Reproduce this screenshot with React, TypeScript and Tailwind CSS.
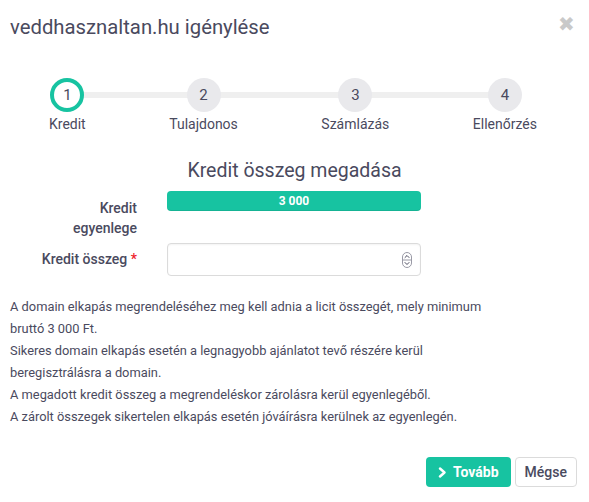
import React from 'react';

const steps = [
  { n: 1, label: 'Kredit', active: true },
  { n: 2, label: 'Tulajdonos', active: false },
  { n: 3, label: 'Számlázás', active: false },
  { n: 4, label: 'Ellenőrzés', active: false },
];

function Stepper() {
  return (
    <div className="relative mx-[49px] mt-[36px] flex w-[488px] justify-between">
      {/* track between first and last circle */}
      <div className="absolute left-[20px] right-[34px] top-[14px] h-[6px] bg-[#efefef]" />
      {steps.map((s) => (
        <div key={s.n} className="relative flex flex-col items-center">
          <div
            className={
              s.active
                ? 'flex h-[34px] w-[34px] items-center justify-center rounded-full border-[4px] border-[#17c3a1] bg-white text-[15px] text-[#4a4a5e]'
                : 'flex h-[34px] w-[34px] items-center justify-center rounded-full bg-[#e9e9ec] text-[15px] text-[#4a4a5e]'
            }
          >
            {s.n}
          </div>
          <span className="mt-[2px] text-[14px] leading-[20px] text-[#4a4a5e]">{s.label}</span>
        </div>
      ))}
    </div>
  );
}

function Spinner() {
  return (
    <svg width="10" height="16" viewBox="0 0 10 16" fill="none">
      <rect x="0.5" y="0.5" width="9" height="15" rx="4.5" stroke="#9a9aa6" />
      <line x1="0.5" y1="8" x2="9.5" y2="8" stroke="#9a9aa6" />
      <path d="M3 5.5l2-2 2 2M3 10.5l2 2 2-2" stroke="#4a4a5e" strokeWidth="1" strokeLinecap="round" strokeLinejoin="round" />
    </svg>
  );
}

export default function App() {
  return (
    <div className="relative h-[502px] w-[589px] overflow-hidden bg-white font-['Roboto',sans-serif] text-[#4a4a5e]">
      <div className="flex items-start justify-between pl-[10px] pr-[14px] pt-[12px]">
        <h1 className="text-[20.3px] leading-[30px]">veddhasznaltan.hu igénylése</h1>
        <button className="mt-[2px] text-[20px] leading-[20px] text-[#c9c9c9]">✖</button>
      </div>

      <Stepper />

      <h2 className="mt-[25px] text-center text-[19.5px] leading-[24px]">Kredit összeg megadása</h2>

      <div className="mt-[8px] grid grid-cols-[137px_254px] gap-x-[30px] gap-y-[5px]">
        <div className="pt-[7px] text-right text-[14px] font-medium leading-[20px]">
          Kredit
          <br />
          egyenlege
        </div>
        <div>
          <div className="flex h-[20px] items-center justify-center rounded-[4px] bg-[#17c3a1] text-[12px] font-bold text-white shadow-[inset_0_-1px_0_rgba(0,0,0,0.08)]">
            3 000
          </div>
        </div>
        <div className="flex items-center justify-end text-[14px] font-medium">
          Kredit összeg&nbsp;<span className="text-[#ee1c2b]">*</span>
        </div>
        <div className="relative flex h-[33px] items-center justify-end rounded-[4px] border border-[#dbdbdb] pr-[8px] shadow-[inset_0_1px_2px_rgba(10,10,10,0.05)]">
          <input type="text" className="absolute inset-0 h-full w-full bg-transparent px-[8px] text-[14px] outline-none" />
          <Spinner />
        </div>
      </div>

      <p className="mt-[20px] px-[10px] text-[12.85px] leading-[22px]">
        A domain elkapás megrendeléséhez meg kell adnia a licit összegét, mely minimum
        <br />
        bruttó 3 000 Ft.
        <br />
        Sikeres domain elkapás esetén a legnagyobb ajánlatot tevő részére kerül
        <br />
        beregisztrálásra a domain.
        <br />
        A megadott kredit összeg a megrendeléskor zárolásra kerül egyenlegéből.
        <br />
        A zárolt összegek sikertelen elkapás esetén jóváírásra kerülnek az egyenlegén.
      </p>

      <div className="mt-[29px] flex justify-end gap-[4px] pr-[12px]">
        <button className="flex h-[30px] items-center gap-[6px] rounded-[4px] bg-[#17c3a1] px-[12px] text-[14px] font-bold text-white">
          <svg width="9" height="11" viewBox="0 0 9 11" fill="none">
            <path d="M2 1.5l4.5 4-4.5 4" stroke="white" strokeWidth="2.4" strokeLinecap="round" strokeLinejoin="round" />
          </svg>
          Tovább
        </button>
        <button className="h-[30px] rounded-[4px] border border-[#dbdbdb] bg-white px-[9px] text-[14px] font-medium text-[#4a4a5e]">
          Mégse
        </button>
      </div>
    </div>
  );
}
